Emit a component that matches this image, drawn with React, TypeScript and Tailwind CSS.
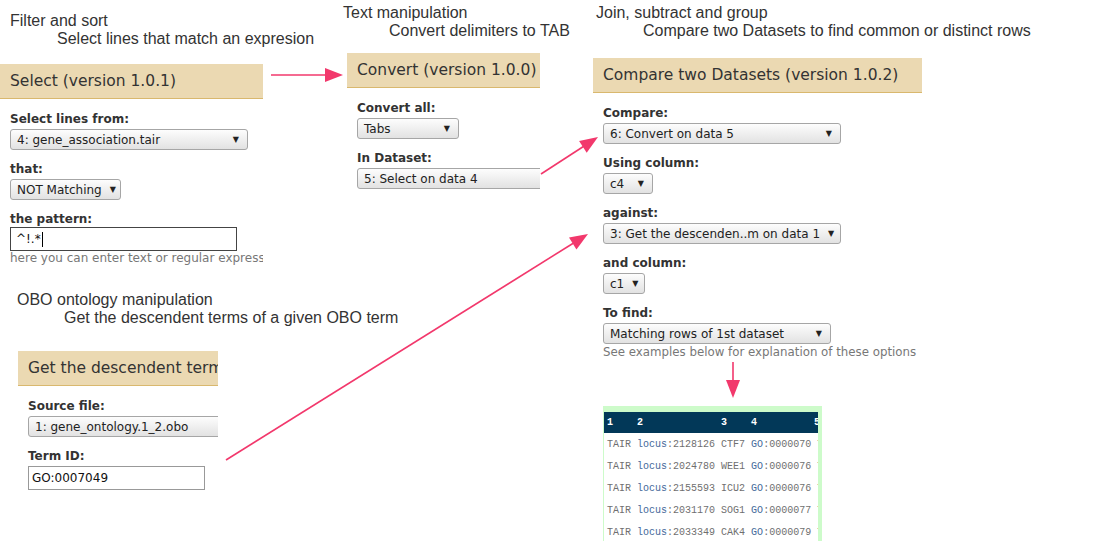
import React from "react";

const ui = "font-['DejaVu_Sans',Verdana,sans-serif]";

function Select({ value, width }: { value: string; width: string }) {
  return (
    <div
      className={`${width} h-[21px] shrink-0 flex items-center justify-between rounded-[3px] border border-[#a6a6a6] bg-gradient-to-b from-[#fdfdfd] to-[#e2e2e2] pl-[6px] pr-[8px] text-[12px] text-[#222] whitespace-nowrap`}
    >
      <span>{value}</span>
      <span className="text-[8px] ml-2">▼</span>
    </div>
  );
}

function Field({ label, children }: { label: string; children: React.ReactNode }) {
  return (
    <div className="flex flex-col">
      <label className="mb-[2px] text-[12px] leading-[16px] font-bold text-[#333]">{label}</label>
      {children}
    </div>
  );
}

function ToolPanel({
  title,
  pos,
  children,
}: {
  title: string;
  pos: string;
  children: React.ReactNode;
}) {
  return (
    <div className={`absolute ${pos} overflow-hidden ${ui}`}>
      <div className="h-[35px] flex items-center pl-[10px] pt-[2px] bg-[#ebd9b2] border-b border-[#d9b86e] text-[15.5px] text-[#333] whitespace-nowrap">
        {title}
      </div>
      <div className="pt-[12px] pl-[10px] flex flex-col gap-[11px]">{children}</div>
    </div>
  );
}

function Caption({ pos, top, sub, indent }: { pos: string; top: string; sub: string; indent: string }) {
  return (
    <div className={`absolute ${pos} font-['Liberation_Sans',Arial,sans-serif] text-[16px] leading-[18px] text-[#333] whitespace-nowrap`}>
      <div>{top}</div>
      <div className={indent}>{sub}</div>
    </div>
  );
}

// arrow: line plus filled head, head drawn from computed direction
function Arrow({ x1, y1, x2, y2 }: { x1: number; y1: number; x2: number; y2: number }) {
  const len = Math.hypot(x2 - x1, y2 - y1);
  const ux = (x2 - x1) / len;
  const uy = (y2 - y1) / len;
  const hl = 18;
  const hw = 7;
  const bx = x2 - ux * hl;
  const by = y2 - uy * hl;
  const pts = `${x2},${y2} ${bx - uy * hw},${by + ux * hw} ${bx + uy * hw},${by - ux * hw}`;
  return (
    <g>
      <line x1={x1} y1={y1} x2={bx + ux * 2} y2={by + uy * 2} stroke="#f2386c" strokeWidth={1.6} />
      <polygon points={pts} fill="#f2386c" />
    </g>
  );
}

const rows = [
  ["2128126", "CTF7", "0000070"],
  ["2024780", "WEE1", "0000076"],
  ["2155593", "ICU2", "0000076"],
  ["2031170", "SOG1", "0000077"],
  ["2033349", "CAK4", "0000079"],
];

function ResultTable() {
  return (
    <div className="absolute left-[603px] top-[406px] w-[219px] h-[140px] bg-[#cdfbca] pt-[6px] pl-[1px] pr-[4px]">
      <div className="h-full bg-white overflow-hidden font-['Liberation_Mono',monospace] text-[10px] whitespace-nowrap">
        <div className="h-[21px] bg-[#023858] flex items-center pl-[3px] text-white font-bold">
          <span className="w-[30px] shrink-0">1</span>
          <span className="w-[84px] shrink-0">2</span>
          <span className="w-[30px] shrink-0">3</span>
          <span className="w-[63px] shrink-0">4</span>
          <span className="shrink-0">5</span>
        </div>
        {rows.map(([locus, gene, go]) => (
          <div key={locus} className="h-[22px] flex items-center pl-[3px] pt-[1px] text-[#6f6f6f]">
            <span>TAIR&nbsp;</span>
            <span className="text-[#44699a]">locus</span>
            <span>:{locus}&nbsp;{gene}&nbsp;</span>
            <span className="text-[#44699a]">GO</span>
            <span>:{go}&nbsp;T</span>
          </div>
        ))}
      </div>
    </div>
  );
}

export default function App() {
  return (
    <div className="relative w-[1096px] h-[541px] overflow-hidden bg-white">
      <Caption pos="left-[10px] top-[12px]" top="Filter and sort" sub="Select lines that match an expresion" indent="pl-[47px]" />
      <Caption pos="left-[343px] top-[4px]" top="Text manipulation" sub="Convert delimiters to TAB" indent="pl-[46px]" />
      <Caption pos="left-[596px] top-[4px]" top="Join, subtract and group" sub="Compare two Datasets to find common or distinct rows" indent="pl-[47px]" />
      <Caption pos="left-[17px] top-[291px]" top="OBO ontology manipulation" sub="Get the descendent terms of a given OBO term" indent="pl-[47px]" />

      <ToolPanel title="Select (version 1.0.1)" pos="left-0 top-[64px] w-[263px]">
        <Field label="Select lines from:">
          <Select value="4: gene_association.tair" width="w-[238px]" />
        </Field>
        <Field label="that:">
          <Select value="NOT Matching" width="w-[111px]" />
        </Field>
        <div className="flex flex-col">
          <label className="text-[12px] leading-[16px] font-bold text-[#333]">the pattern:</label>
          <div className="w-[227px] h-[24px] border border-[#444] flex items-center pl-[5px] text-[12px] text-[#111]">
            ^!.*<span className="ml-[1px] w-px h-[15px] bg-black" />
          </div>
          <p className="text-[12px] leading-[15px] text-[#777] whitespace-nowrap">here you can enter text or regular expression</p>
        </div>
      </ToolPanel>

      <ToolPanel title="Convert (version 1.0.0)" pos="left-[347px] top-[53px] w-[193px]">
        <Field label="Convert all:">
          <Select value="Tabs" width="w-[102px]" />
        </Field>
        <Field label="In Dataset:">
          <Select value="5: Select on data 4" width="w-[238px]" />
        </Field>
      </ToolPanel>

      <ToolPanel title="Compare two Datasets (version 1.0.2)" pos="left-[593px] top-[58px] w-[329px]">
        <Field label="Compare:">
          <Select value="6: Convert on data 5" width="w-[238px]" />
        </Field>
        <Field label="Using column:">
          <Select value="c4" width="w-[50px]" />
        </Field>
        <Field label="against:">
          <Select value="3: Get the descenden..m on data 1" width="w-[238px]" />
        </Field>
        <Field label="and column:">
          <Select value="c1" width="w-[42px]" />
        </Field>
        <div className="flex flex-col">
          <label className="mb-[2px] text-[12px] leading-[16px] font-bold text-[#333]">To find:</label>
          <Select value="Matching rows of 1st dataset" width="w-[228px]" />
          <p className="text-[11.8px] leading-[16px] text-[#777] whitespace-nowrap">See examples below for explanation of these options</p>
        </div>
      </ToolPanel>

      <ToolPanel title="Get the descendent terms of a given OBO term" pos="left-[18px] top-[351px] w-[200px]">
        <Field label="Source file:">
          <Select value="1: gene_ontology.1_2.obo" width="w-[238px]" />
        </Field>
        <Field label="Term ID:">
          <div className="w-[177px] h-[24px] border border-[#999] flex items-center pl-[3px] text-[12px] text-[#111]">GO:0007049</div>
        </Field>
      </ToolPanel>

      <ResultTable />

      <svg className="absolute inset-0 pointer-events-none" width={1096} height={541}>
        <Arrow x1={271} y1={75} x2={343} y2={75} />
        <Arrow x1={541} y1={174} x2={598} y2={137} />
        <Arrow x1={226} y1={460} x2={588} y2={234} />
        <Arrow x1={733} y1={362} x2={733} y2={398} />
      </svg>
    </div>
  );
}
